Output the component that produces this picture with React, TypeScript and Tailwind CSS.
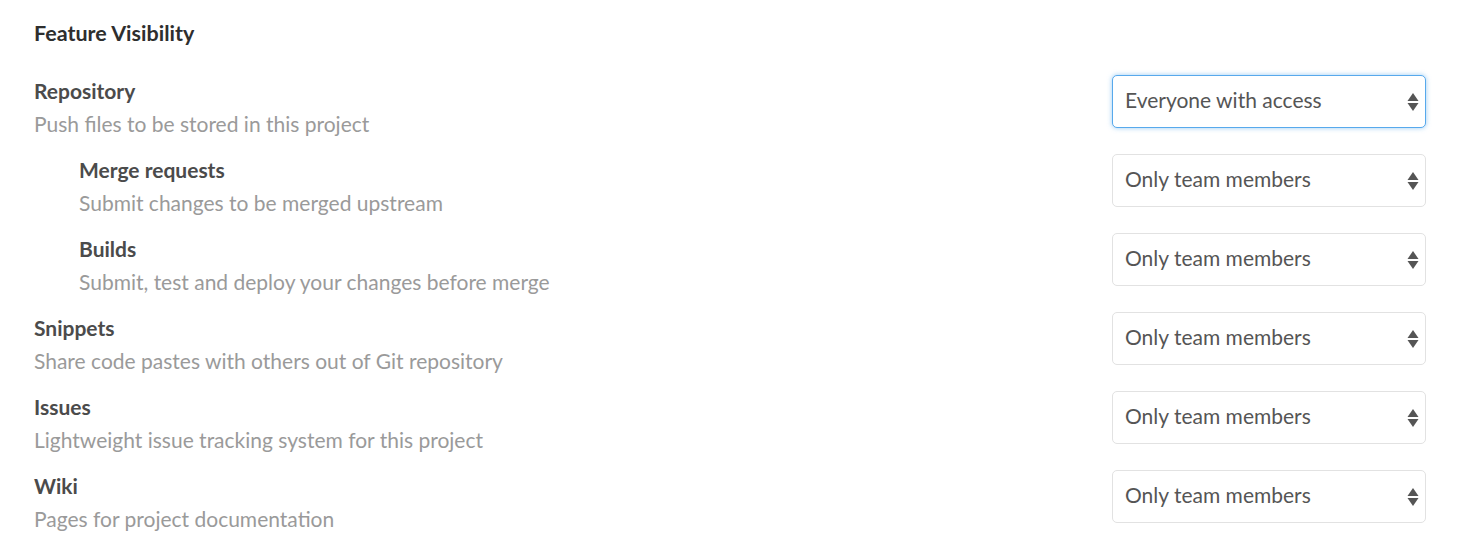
const rows = [
  { title: "Repository", desc: "Push files to be stored in this project", value: "Everyone with access", indent: false, focused: true },
  { title: "Merge requests", desc: "Submit changes to be merged upstream", value: "Only team members", indent: true },
  { title: "Builds", desc: "Submit, test and deploy your changes before merge", value: "Only team members", indent: true },
  { title: "Snippets", desc: "Share code pastes with others out of Git repository", value: "Only team members", indent: false },
  { title: "Issues", desc: "Lightweight issue tracking system for this project", value: "Only team members", indent: false },
  { title: "Wiki", desc: "Pages for project documentation", value: "Only team members", indent: false },
];

function SelectBox({ value, focused }: { value: string; focused?: boolean }) {
  return (
    <div
      className={
        "w-[314px] h-[53px] rounded-[5px] bg-white flex items-center justify-between pl-[12px] pr-[6px] text-[21px] text-[#555] " +
        (focused
          ? "border border-[#57a9ec] shadow-[0_0_5px_rgba(87,169,236,0.6)]"
          : "border border-[#e2e2e2]")
      }
    >
      <span className="pb-[4px]">{value}</span>
      {/* flechas do select */}
      <svg width="12" height="20" viewBox="0 0 12 20">
        <polygon points="6,1 11.5,9 0.5,9" fill="#555" />
        <polygon points="0.5,11 11.5,11 6,19" fill="#555" />
      </svg>
    </div>
  );
}

export default function App() {
  return (
    <div className="w-[1459px] h-[549px] bg-white pl-[34px] pr-[33px] pt-[17px]" style={{ fontFamily: "Lato, 'Open Sans', sans-serif" }}>
      <h4 className="h-[32px] leading-[32px] text-[21.5px] font-bold text-[#2e2e2e]">Feature Visibility</h4>
      <div className="mt-[26px] flex flex-col gap-[14px]">
        {rows.map((r) => (
          <div key={r.title} className="flex justify-between h-[65px]">
            <div className={r.indent ? "pl-[45px]" : ""}>
              <div className="h-[32px] leading-[32px] text-[21px] font-bold text-[#4b4b4b]">{r.title}</div>
              <div className="h-[33px] leading-[33px] text-[21px] text-[#9a9a9a]">{r.desc}</div>
            </div>
            <SelectBox value={r.value} focused={r.focused} />
          </div>
        ))}
      </div>
    </div>
  );
}
